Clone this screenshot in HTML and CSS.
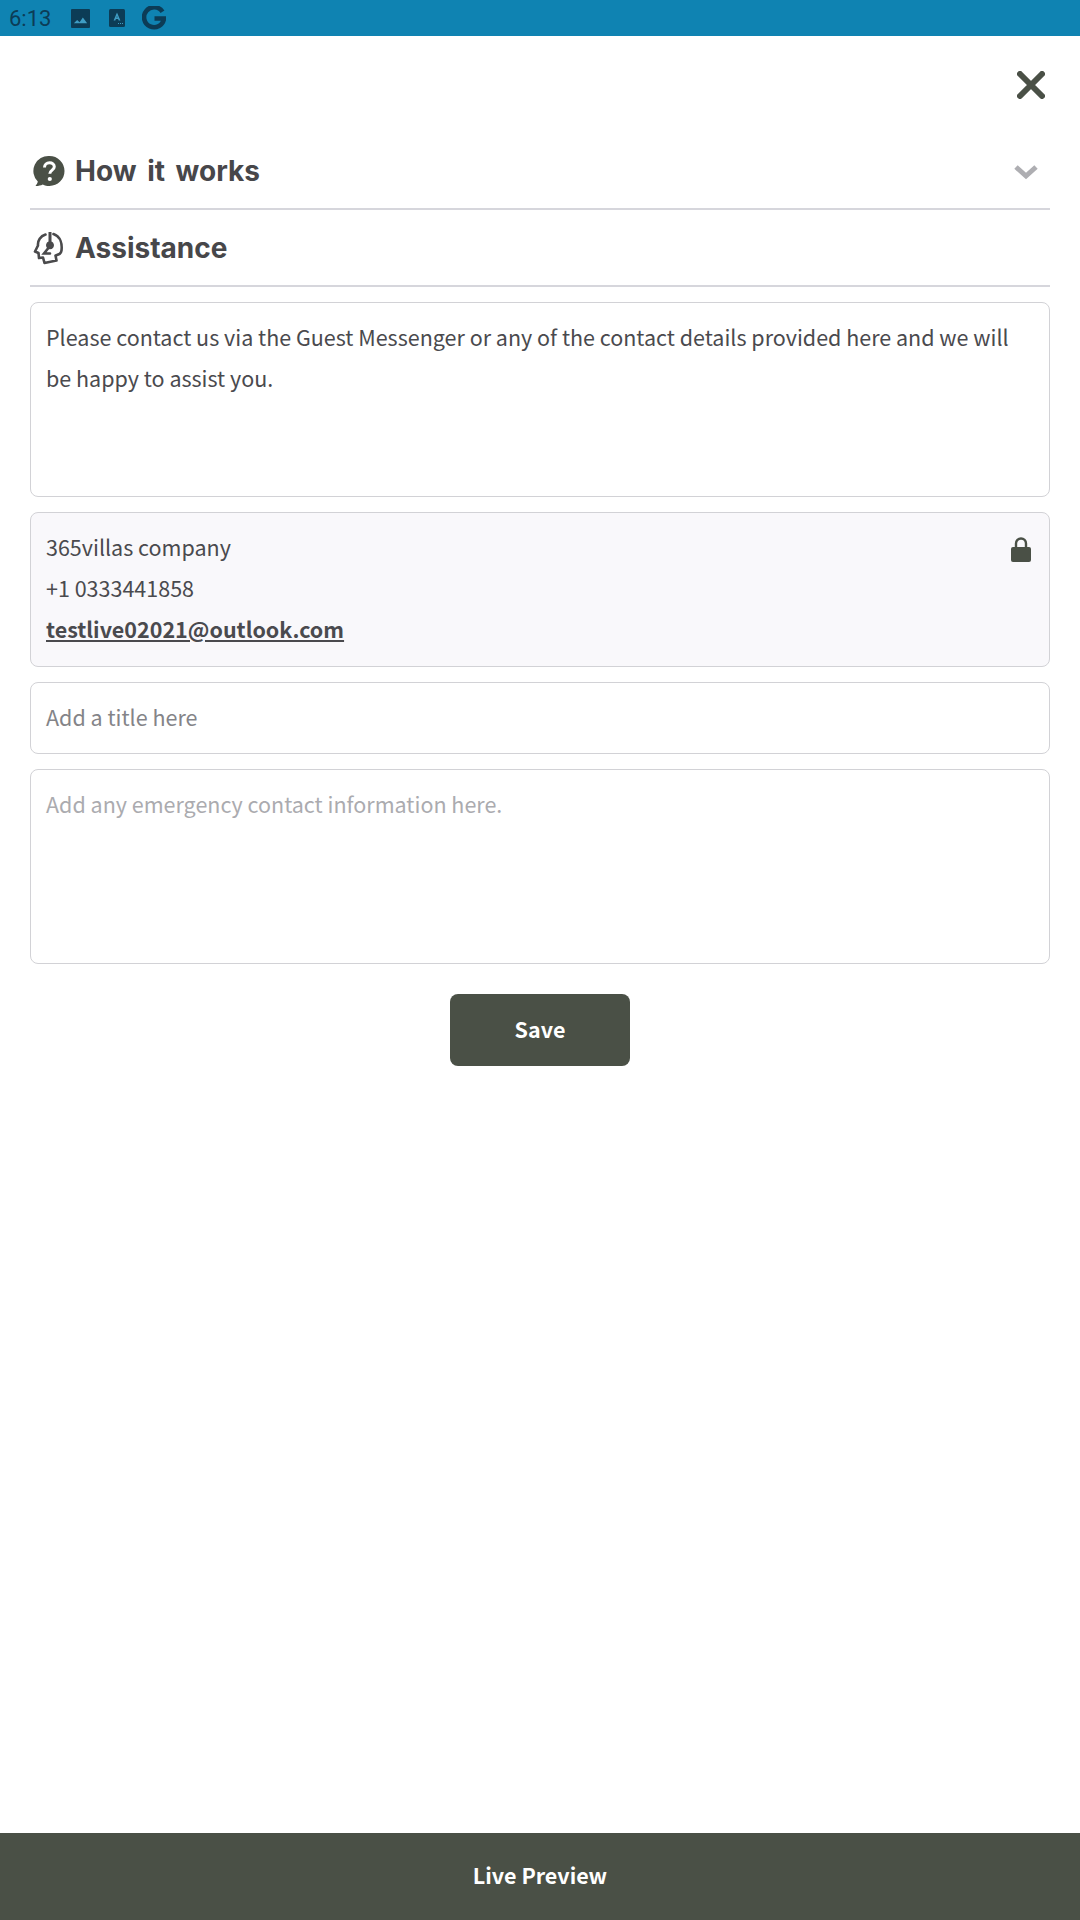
FILE: index.html
```html
<!DOCTYPE html>
<html lang="en">
<head>
  <meta charset="UTF-8">
  <meta name="viewport" content="width=device-width, initial-scale=1.0">
  <title>Assistance</title>
  <link rel="stylesheet" href="styles.css">
</head>
<body>
  <div class="page">

    <!-- Status bar -->
    <div class="status-bar">
      <span class="status-time">6:13</span>
      <svg class="status-photo" viewBox="0 0 20 20"><path fill="#0c3c56" d="M1 0h18a1 1 0 0 1 1 1v18a1 1 0 0 1-1 1H1a1 1 0 0 1-1-1V1a1 1 0 0 1 1-1z"/><path fill="#3f9dc4" d="M3 15l3.500-3.500L9 14l3.500-5 4.500 6z"/></svg>
      <svg class="status-app" viewBox="0 0 16 18"><rect width="16" height="18" rx="1.500" fill="#0c3c56"/><path fill="#3f9dc4" d="M8 3.500l3.400 8h-1.700l-.6-1.500H6.900l-.6 1.500H4.600zM7.400 8.500h1.200L8 7z"/><path fill="#3f9dc4" d="M9 14h1v1H9zM11 14h1v1h-1zM13 14h1v1h-1z"/></svg>
      <svg class="status-g" viewBox="0 0 24 24"><path fill="none" stroke="#0c3c56" stroke-width="4.600" d="M20.500 5.800A10 10 0 1 0 22 12.500H12.500"/></svg>
    </div>

    <div class="close-row">
      <svg class="close-icon" viewBox="0 0 28 28"><path d="M3 3l22 22M25 3L3 25" stroke="#4a5046" stroke-width="6" stroke-linecap="round"/></svg>
    </div>

    <!-- Sections -->
    <div class="section section-first">
      <svg class="section-icon" viewBox="0 0 32 32">
        <path fill="#4a5046" d="M16.500 1a15 15 0 0 1 0 30c-2.500 0-4.700-.6-6.700-1.600-2.200 1-4.600 1.600-7.300 1.500 1.200-1.300 2-2.700 2.300-4.300A15 15 0 0 1 16.500 1z"/>
        <path fill="none" stroke="#fff" stroke-width="3" d="M11.500 12.500c0-3 2.200-4.700 5-4.700s4.800 1.600 4.800 4c0 3.400-4.500 3.400-4.500 7"/>
        <circle cx="16.800" cy="24" r="2.100" fill="#fff"/>
      </svg>
      <h2 class="section-title">How it works</h2>
      <svg class="chevron" viewBox="0 0 26 16"><path d="M3 3l10 9 10-9" fill="none" stroke="#aeaeb2" stroke-width="5"/></svg>
    </div>
    <div class="section">
      <svg class="section-icon" viewBox="0 0 32 34">
        <path fill="none" stroke="#4a4a4c" stroke-width="2.600" stroke-linejoin="round" stroke-linecap="round" d="M12.500 3.500C7.500 5 4.500 9.500 5 14.500l-3 6 3.500 1.500.5 5 4-.5 1.500 5.500 12-2.500-1-5c3.500-1 5.500-1.500 6-5 .8-6.500-1-14-8-16.500"/>
        <path fill="none" stroke="#4a4a4c" stroke-width="2.600" stroke-linecap="round" d="M17 15l-6 7.500h6"/>
        <path fill="#4a4a4c" d="M15.500 1h3v9.500a4 4 0 1 1-3 0z"/>
      </svg>
      <h2 class="section-title">Assistance</h2>
    </div>

    <!-- Form -->
    <div class="form">
      <div class="box box-tall">Please contact us via the Guest Messenger or any of the contact details provided here and we will be happy to assist you.</div>
      <div class="box box-locked">
        <svg class="lock-icon" viewBox="0 0 20 25"><path fill="none" stroke="#4a5046" stroke-width="2.400" d="M5 11V6.500a5 5 0 0 1 10 0V11"/><rect y="10" width="20" height="15" rx="2" fill="#4a5046"/></svg>
        <div class="locked-line">365villas company</div>
        <div class="locked-line">+1 0333441858</div>
        <div class="locked-line"><a class="locked-mail" href="#">testlive02021@outlook.com</a></div>
      </div>
      <div class="box box-input">Add a title here</div>
      <div class="box box-tall box-placeholder">Add any emergency contact information here.</div>
      <div class="save-row"><button class="save-button">Save</button></div>
    </div>

    <div class="preview-bar">Live Preview</div>
  </div>
</body>
</html>
```

FILE: styles.css
```css
* {
  box-sizing: border-box;
}
body {
  margin: 0;
  background: #fff;
  font-family: "Noto Sans CJK SC", "Noto Sans", sans-serif;
  color: #4a4a4e;
}
.page {
  display: flex;
  flex-direction: column;
  height: 1920px;
}
.status-bar {
  display: flex;
  align-items: center;
  height: 36px;
  padding-left: 9px;
  background: #0f83b2;
}
.status-time {
  font-family: Roboto, sans-serif;
  font-size: 22px;
  color: #0c3c56;
  width: 62px;
}
.status-photo {
  width: 19px;
  height: 19px;
  margin-right: 19px;
}
.status-app {
  width: 16px;
  height: 18px;
  margin-right: 17px;
}
.status-g {
  width: 24px;
  height: 24px;
}
.close-row {
  display: flex;
  justify-content: flex-end;
  height: 98px;
  padding: 35px 35px 0 0;
}
.close-icon {
  width: 28px;
  height: 28px;
}
.section {
  display: flex;
  align-items: center;
  height: 77px;
  margin: 0 30px;
  padding-left: 3px;
  border-bottom: 2px solid #d6d6dc;
}
.section-first {
  height: 76px;
}
.section-icon {
  width: 32px;
  height: 34px;
  margin-right: 10px;
}
.section-title {
  margin: 0;
  font-family: Inter, sans-serif;
  font-size: 28px;
  font-weight: 700;
  word-spacing: 4px;
  color: #47474a;
}
.chevron {
  width: 26px;
  height: 16px;
  margin: 2px 11px 0 auto;
}
.form {
  display: flex;
  flex-direction: column;
  gap: 15px;
  margin: 15px 30px 0;
}
.box {
  border: 1px solid #d2d2d6;
  border-radius: 8px;
  padding: 13px 15px;
  font-size: 21.5px;
  line-height: 41px;
}
.box-tall {
  height: 195px;
}
.box-locked {
  position: relative;
  height: 155px;
  background: #f9f8fb;
}
.lock-icon {
  position: absolute;
  top: 24px;
  right: 18px;
  width: 20px;
  height: 25px;
}
.locked-mail {
  font-weight: 700;
  color: #4a4a4e;
}
.box-input {
  height: 72px;
  color: #848488;
}
.box-placeholder {
  color: #ababaf;
}
.save-row {
  display: flex;
  justify-content: center;
  margin-top: 15px;
}
.save-button {
  width: 180px;
  height: 72px;
  padding: 0 0 4px;
  border: none;
  border-radius: 8px;
  background: #4a5046;
  color: #fff;
  font-family: inherit;
  font-size: 21.5px;
  font-weight: 700;
}
.preview-bar {
  display: flex;
  align-items: center;
  justify-content: center;
  height: 87px;
  margin-top: auto;
  padding-bottom: 4px;
  background: #4a5046;
  color: #fff;
  font-size: 21.5px;
  font-weight: 700;
}
```
